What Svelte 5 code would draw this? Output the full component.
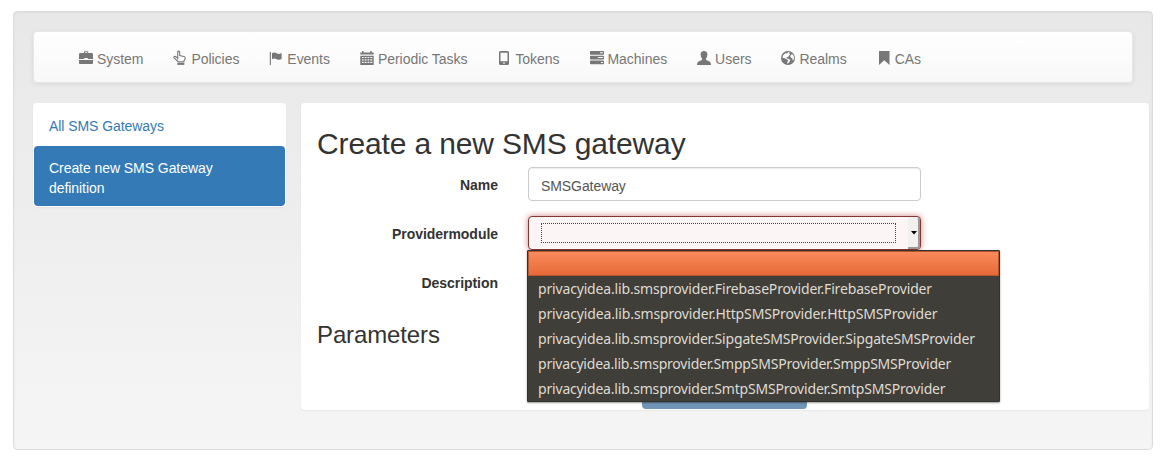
<script>
  const nav = [
    { label: 'System', icon: 'briefcase' },
    { label: 'Policies', icon: 'hand' },
    { label: 'Events', icon: 'flag' },
    { label: 'Periodic Tasks', icon: 'calendar' },
    { label: 'Tokens', icon: 'phone' },
    { label: 'Machines', icon: 'tasks' },
    { label: 'Users', icon: 'user' },
    { label: 'Realms', icon: 'globe' },
    { label: 'CAs', icon: 'bookmark' }
  ];
  const providers = [
    { name: 'privacyidea.lib.smsprovider.FirebaseProvider.FirebaseProvider', tracking: -0.165 },
    { name: 'privacyidea.lib.smsprovider.HttpSMSProvider.HttpSMSProvider', tracking: -0.14 },
    { name: 'privacyidea.lib.smsprovider.SipgateSMSProvider.SipgateSMSProvider', tracking: -0.175 },
    { name: 'privacyidea.lib.smsprovider.SmppSMSProvider.SmppSMSProvider', tracking: -0.21 },
    { name: 'privacyidea.lib.smsprovider.SmtpSMSProvider.SmtpSMSProvider', tracking: -0.185 }
  ];
</script>

{#snippet glyph(name)}
  <svg class="icon" viewBox="0 0 14 15" aria-hidden="true">
    {#if name === 'briefcase'}
      <path fill-rule="evenodd" d="M5 2V.8Q5 .2 5.6.2h3Q9.200.2 9.200.8V2h3.300Q14 2 14 3.400V8H8.800V7H5.200v1H0V3.400Q0 2 1.500 2zM6 2h2.300V1.200H6zM0 9h14v3.200q0 .8-.8.8H.8q-.8 0-.8-.8z" />
    {:else if name === 'hand'}
      <path class="line" d="M4.700 8.600V1.200Q4.700.1 5.700.1t1 1.100V4.500l4.200 1q1.300.3 1.300 1.400 0 1.500-1.300 3.100v.9H4.900l-.3-.8L1 6.800Q.5 5.900 1.300 5.500q.8-.5 1.900.5l1.500 1" />
      <path d="M4.300 12h7v1.900h-7z" />
    {:else if name === 'flag'}
      <path d="M.8 1h1.100v13H.8zM3 2.200q2.200-1.300 4.700.1 2.400 1.300 4.900-.2v6q-2.300 1.400-4.800.2-2.400-1.400-4.800 0z" />
    {:else if name === 'calendar'}
      <path fill-rule="evenodd" d="M.3 1.500H2V0h1.500v1.500h6.700V0h1.500v1.500h2v2H.3zM.3 4.700h13.400V14H.3zM2 6v1.100h1.700V6zm2.700 0v1.100h1.800V6zm2.800 0v1.100h1.800V6zm2.800 0v1.100h2V6zM2 8.200v1.300h1.700V8.200zm2.700 0v1.300h1.800V8.200zm2.800 0v1.300h1.800V8.200zm2.800 0v1.300h2V8.200zM2 10.700V12h1.700v-1.300zm2.700 0V12h1.800v-1.300zm2.800 0V12h1.800v-1.300zm2.800 0V12h2v-1.300z" />
    {:else if name === 'phone'}
      <path fill-rule="evenodd" d="M3.500 0h7Q12 0 12 1.500v11q0 1.500-1.500 1.500h-7Q2 14 2 12.500v-11Q2 0 3.500 0zm0 1.700v8.600h7V1.700zm2.700 9.800v1.200h1.600v-1.200z" />
    {:else if name === 'tasks'}
      <path fill-rule="evenodd" d="M.8 0h12.500q.7 0 .7.7v2.300q0 .7-.7.7H.8Q0 3.700 0 3V.7Q0 0 .8 0zm0 4.800h12.500q.7 0 .7.7v2.300q0 .7-.7.7H.8Q0 8.500 0 7.800V5.500q0-.7.8-.7zm0 4.800h12.500q.7 0 .7.7v2.200q0 .7-.7.7H.8q-.8 0-.8-.7v-2.200q0-.7.8-.7zM10 1.300v1h3v-1zM7.800 6.100v1H13v-1zm3.200 4.800v1h2v-1z" />
    {:else if name === 'user'}
      <path d="M7 0q3.400 0 3.400 3.500 0 2.300-1.300 3.800-.4 1.300.2 1.800 1.100.7 3.200 1.500Q14 11.500 14 14H0q0-2.500 1.500-3.400 2.100-.8 3.200-1.500.6-.5.2-1.800Q3.600 5.800 3.600 3.500 3.600 0 7 0z" />
    {:else if name === 'globe'}
      <path fill-rule="evenodd" d="M7 0a7 7 0 1 1 0 14A7 7 0 0 1 7 0zM2 4.200 1.500 6.800l2 .5 2.700 1.300 1 1.200-1 1.100.2 1.900 1.700-1.200 1.400-2.600-2-1.200-1.800-.2-.3-1.200 2-.7.8-1.500 1.100-.8-1-.3.400-1.500L7 1l-.8 1.800-1.500-.8zM10 3.700 9.300 5l.5 1.700 1.600.5.1 1.700.8.5.8-2.500-.6-2.300-1.300-1.500z" />
    {:else}
      <path d="M2 0h10.500v14L7.250 9.200 2 14z" />
    {/if}
  </svg>
{/snippet}

<main class="well">
  <nav class="navbar">
    {#each nav as item}
      <a>{@render glyph(item.icon)}<span>{item.label}</span></a>
    {/each}
  </nav>

  <div class="columns">
    <aside class="side">
      <a>All SMS Gateways</a>
      <a class="active">Create new SMS Gateway definition</a>
    </aside>

    <section class="content">
      <h2>Create a new SMS gateway</h2>
      <div class="row">
        <div class="label">Name</div>
        <div class="control">SMSGateway</div>
      </div>
      <div class="row">
        <div class="label">Providermodule</div>
        <div class="control select">
          <div class="focus"></div>
          <div class="arrow"><svg viewBox="0 0 6 4"><path d="M0 0h6L3 3.500z" /></svg></div>
          <ul class="menu">
            <li class="selected"></li>
            {#each providers as provider}
              <li style:letter-spacing="{provider.tracking}px">{provider.name}</li>
            {/each}
          </ul>
        </div>
      </div>
      <div class="row">
        <div class="label">Description</div>
      </div>
      <h3>Parameters</h3>
      <div class="save"></div>
    </section>
  </div>
</main>

<style>
  :global(body) {
    background: #fff;
    overflow: hidden;
  }
  * {
    box-sizing: border-box;
  }
  .well {
    width: 1140px;
    height: 439px;
    margin: 11px 0 0 13px;
    padding: 19px;
    border: 1px solid #dcdcdc;
    border-radius: 4px;
    background: linear-gradient(#e8e8e8, #f5f5f5);
    box-shadow: inset 0 1px 3px rgba(0, 0, 0, 0.05);
    font: 14px/20px "Liberation Sans", Arial, sans-serif;
    color: #333;
  }
  .navbar {
    display: flex;
    width: 1100px;
    height: 52px;
    padding: 2px 0 0 30px;
    border: 1px solid #e7e7e7;
    border-radius: 4px;
    background: linear-gradient(#fff, #f8f8f8);
    box-shadow: 0 1px 5px rgba(0, 0, 0, 0.075);
    color: #777;
    letter-spacing: -0.04px;
  }
  .navbar a {
    display: flex;
    gap: 4px;
    padding: 15px 15px 0;
  }
  .icon {
    width: 14px;
    height: 15px;
    margin-top: 2px;
    overflow: visible;
    fill: currentColor;
  }
  .line {
    fill: none;
    stroke: currentColor;
    stroke-width: 1.1;
  }
  .columns {
    display: flex;
    align-items: flex-start;
    gap: 15px;
    margin-top: 20px;
  }
  .side {
    flex: none;
    width: 253px;
    padding: 3px 1px 1px;
    border-radius: 4px;
    background: #fff;
    box-shadow: 0 1px 2px rgba(0, 0, 0, 0.05);
    letter-spacing: -0.06px;
  }
  .side a {
    display: block;
    height: 40px;
    padding: 10px 15px 0;
    color: #337ab7;
  }
  .side .active {
    height: 60px;
    padding-top: 12px;
    border-radius: 4px;
    background: #337ab7;
    color: #fff;
  }
  .content {
    flex: none;
    width: 848px;
    height: 307px;
    padding: 24px 16px 0;
    border-radius: 4px;
    background: #fff;
    box-shadow: 0 1px 2px rgba(0, 0, 0, 0.05);
  }
  h2,
  h3 {
    margin: 0;
    font-weight: 400;
  }
  h2 {
    height: 40px;
    font-size: 30px;
    line-height: 33px;
    letter-spacing: -0.14px;
  }
  .row {
    display: flex;
    gap: 30px;
    height: 34px;
    margin-bottom: 15px;
  }
  .label {
    width: 181px;
    padding-top: 8px;
    text-align: right;
    font-weight: 700;
    letter-spacing: -0.04px;
  }
  .control {
    width: 393px;
    height: 34px;
    padding: 8px 12px 0;
    border: 1px solid #ccc;
    border-radius: 4px;
    box-shadow: inset 0 1px 1px rgba(0, 0, 0, 0.075);
    color: #555;
    letter-spacing: -0.08px;
  }
  .select {
    position: relative;
    display: flex;
    justify-content: space-between;
    padding: 0 0 0 12px;
    border-color: #843534;
    background: #fbf5f5;
    box-shadow: 0 0 6px #ce8483;
  }
  .focus {
    width: 355px;
    height: 20px;
    margin-top: 6px;
    border: 1px dotted #444;
  }
  .arrow {
    display: flex;
    width: 12px;
    height: 32px;
    padding: 14px 0 0 3px;
    border-right: 2px solid #999;
    border-bottom: 2px solid #999;
    border-radius: 0 3px 3px 0;
    background: #f0f0ee;
  }
  .arrow svg {
    flex: none;
    width: 6px;
    height: 4px;
  }
  .menu {
    position: absolute;
    z-index: 1;
    top: 33px;
    left: -2px;
    width: 473px;
    height: 152px;
    margin: 0;
    padding: 0;
    border: 1px solid #33322e;
    border-radius: 1px;
    background: #403e39;
    box-shadow: 0 1px 2px rgba(0, 0, 0, 0.4);
    list-style: none;
    font: 14px/25px "Noto Sans", "Open Sans", sans-serif;
    color: #dfdbd2;
  }
  .menu li {
    height: 25px;
    padding-left: 10px;
    white-space: nowrap;
  }
  .menu .selected {
    border: 1px solid #b5562f;
    background: linear-gradient(#fa8a5c, #e66a38);
  }
  h3 {
    height: 40px;
    padding-top: 8px;
    font-size: 24px;
    line-height: 26px;
    letter-spacing: -0.12px;
  }
  .save {
    width: 165px;
    height: 34px;
    margin: 21px 0 0 325px;
    border-radius: 4px;
    background: #7195b8;
  }
</style>
